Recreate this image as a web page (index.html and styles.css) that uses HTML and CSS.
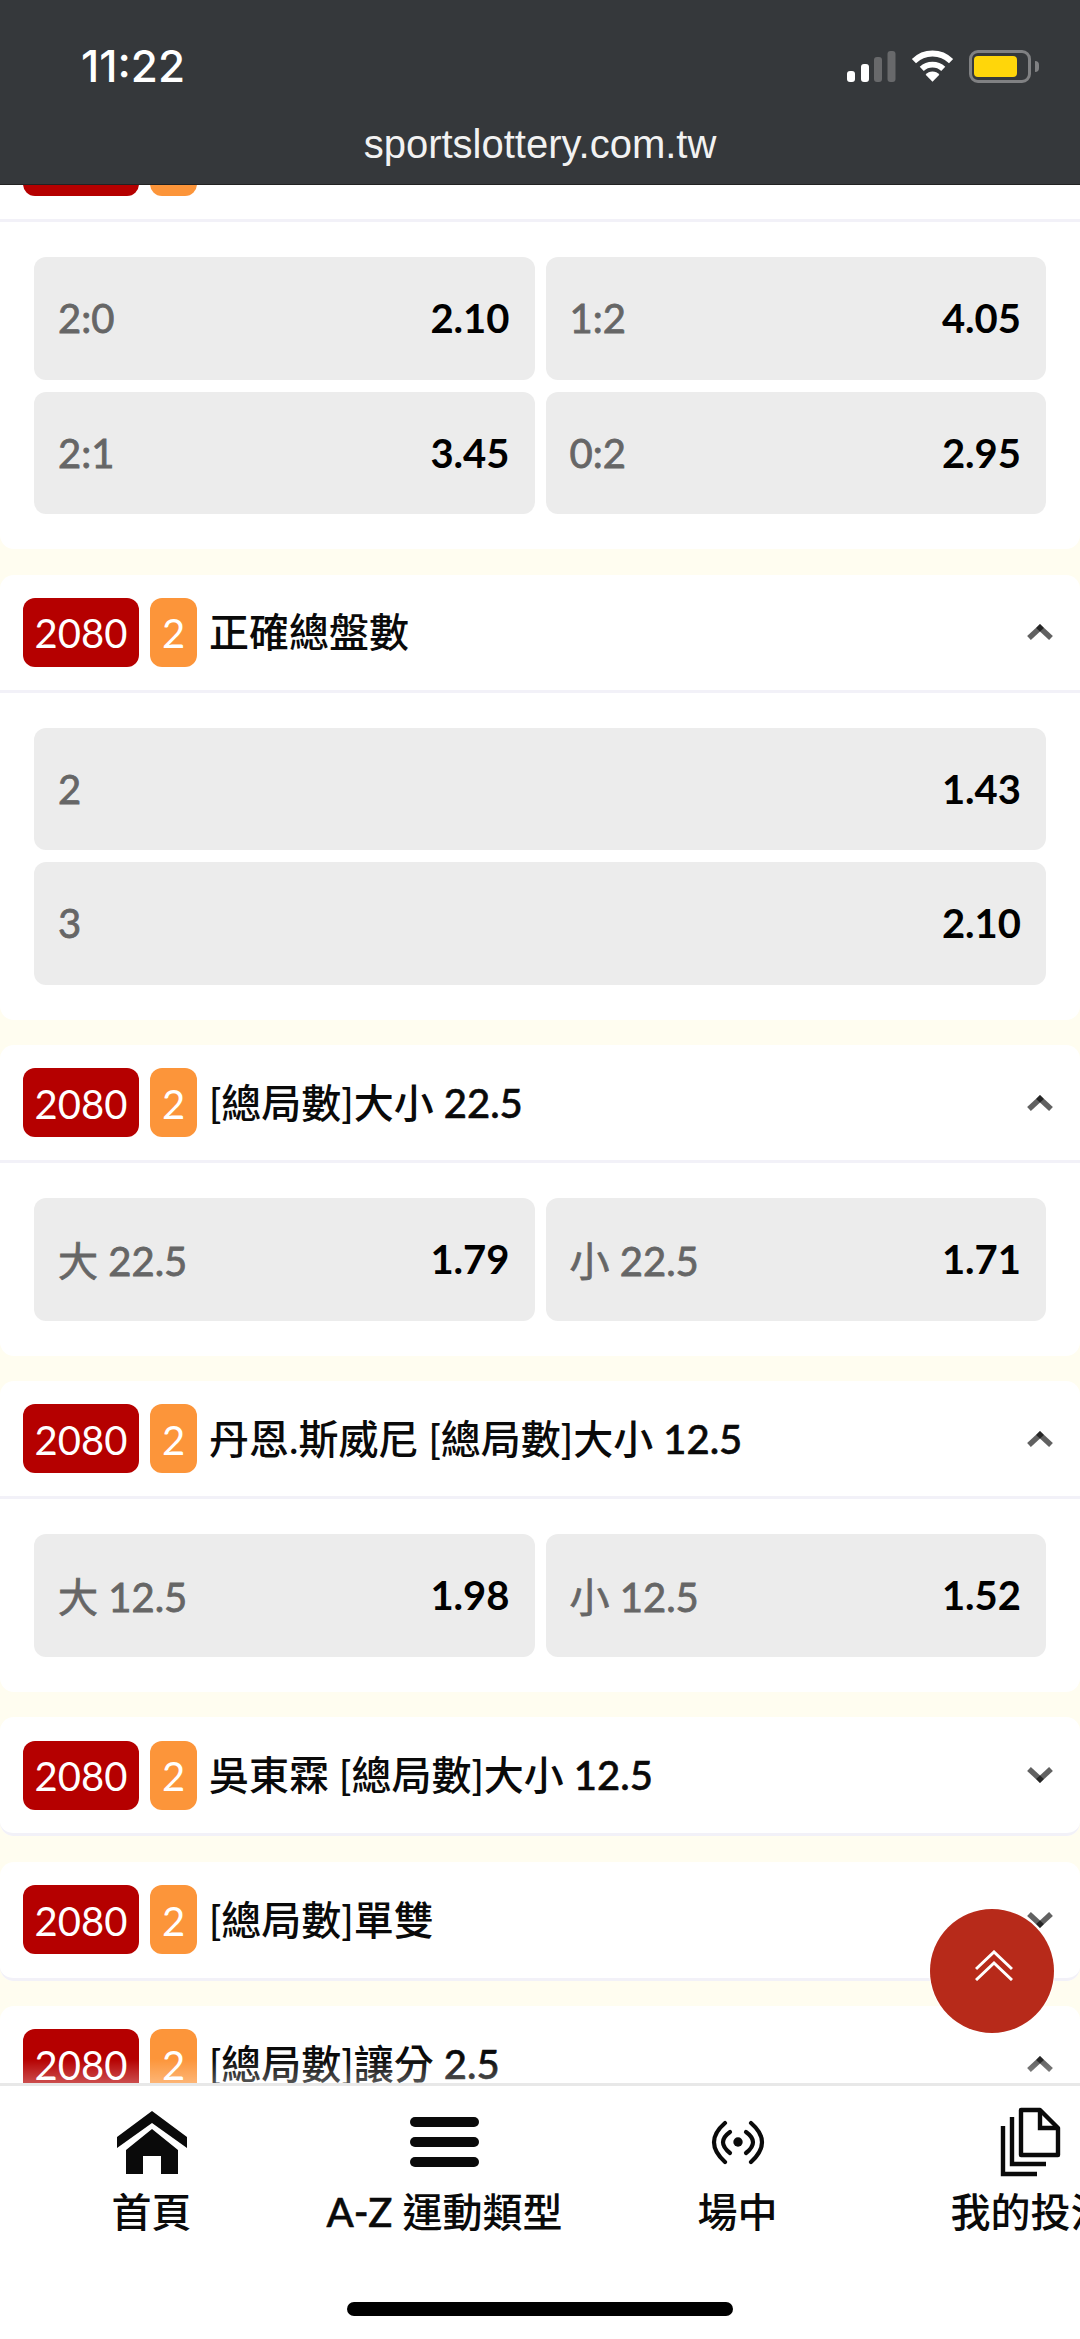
FILE: index.html
```html
<!DOCTYPE html>
<html>

<head>
	<meta charset="UTF-8">
	<link rel="stylesheet" href="styles.css">
</head>

<body>
	<div class="phone">
		<!-- 狀態列 + 網址 -->
		<div class="top-bar">
			<div class="status-row">
				<div class="clock">11:22</div>
				<div class="status-icons">
					<svg width="49" height="31" viewBox="0 0 49 31">
						<rect x="0" y="20" width="8" height="11" rx="3" fill="#fff" />
						<rect x="14" y="13" width="8" height="18" rx="3" fill="#fff" />
						<rect x="27" y="6" width="8" height="25" rx="3" fill="#68696b" />
						<rect x="40.5" y="0" width="8" height="31" rx="3" fill="#68696b" />
					</svg>
					<svg width="43" height="32" viewBox="0 0 44 32">
						<path d="M3 11 A27 27 0 0 1 41 11" fill="none" stroke="#fff" stroke-width="6" />
						<path d="M11 19 A16 16 0 0 1 33 19" fill="none" stroke="#fff" stroke-width="6" />
						<path d="M15 25 A9 9 0 0 1 29 25 L22 32 Z" fill="#fff" />
					</svg>
					<div class="battery">
						<div class="battery-fill"></div>
					</div>
					<div class="battery-cap"></div>
				</div>
			</div>
			<div class="url">sportslottery.com.tw</div>
		</div>

		<div class="scroll-area">
			<div class="market-list">
				<!-- 第一個面板上方被頂欄蓋住 -->
				<div class="market">
					<div class="market-head">
						<span class="badge-code"></span>
						<span class="badge-num"></span>
					</div>
					<div class="market-body odds-grid">
						<div class="odd"><span class="odd-name">2:0</span><span class="odd-price">2.10</span></div>
						<div class="odd"><span class="odd-name">1:2</span><span class="odd-price">4.05</span></div>
						<div class="odd"><span class="odd-name">2:1</span><span class="odd-price">3.45</span></div>
						<div class="odd"><span class="odd-name">0:2</span><span class="odd-price">2.95</span></div>
					</div>
				</div>

				<div class="market">
					<div class="market-head">
						<span class="badge-code">2080</span>
						<span class="badge-num">2</span>
						<span class="market-title">正確總盤數</span>
						<svg class="chev" viewBox="0 0 26 16"><path d="M2 14 L15 2" /><path d="M24 14 L11 2" /></svg>
					</div>
					<div class="market-body odds-grid">
						<div class="odd wide"><span class="odd-name">2</span><span class="odd-price">1.43</span></div>
						<div class="odd wide"><span class="odd-name">3</span><span class="odd-price">2.10</span></div>
					</div>
				</div>

				<div class="market">
					<div class="market-head">
						<span class="badge-code">2080</span>
						<span class="badge-num">2</span>
						<span class="market-title">[總局數]大小 <span class="latin">22.5</span></span>
						<svg class="chev" viewBox="0 0 26 16"><path d="M2 14 L15 2" /><path d="M24 14 L11 2" /></svg>
					</div>
					<div class="market-body odds-grid">
						<div class="odd"><span class="odd-name">大 22.5</span><span class="odd-price">1.79</span></div>
						<div class="odd"><span class="odd-name">小 22.5</span><span class="odd-price">1.71</span></div>
					</div>
				</div>

				<div class="market">
					<div class="market-head">
						<span class="badge-code">2080</span>
						<span class="badge-num">2</span>
						<span class="market-title">丹恩.斯威尼 [總局數]大小 <span class="latin">12.5</span></span>
						<svg class="chev" viewBox="0 0 26 16"><path d="M2 14 L15 2" /><path d="M24 14 L11 2" /></svg>
					</div>
					<div class="market-body odds-grid">
						<div class="odd"><span class="odd-name">大 12.5</span><span class="odd-price">1.98</span></div>
						<div class="odd"><span class="odd-name">小 12.5</span><span class="odd-price">1.52</span></div>
					</div>
				</div>

				<div class="market closed">
					<div class="market-head">
						<span class="badge-code">2080</span>
						<span class="badge-num">2</span>
						<span class="market-title">吳東霖 [總局數]大小 <span class="latin">12.5</span></span>
						<svg class="chev" viewBox="0 0 26 16"><path d="M2 2 L15 14" /><path d="M24 2 L11 14" /></svg>
					</div>
				</div>

				<div class="market closed">
					<div class="market-head">
						<span class="badge-code">2080</span>
						<span class="badge-num">2</span>
						<span class="market-title">[總局數]單雙</span>
						<svg class="chev" viewBox="0 0 26 16"><path d="M2 2 L15 14" /><path d="M24 2 L11 14" /></svg>
					</div>
				</div>

				<div class="market">
					<div class="market-head">
						<span class="badge-code">2080</span>
						<span class="badge-num">2</span>
						<span class="market-title">[總局數]讓分 <span class="latin">2.5</span></span>
						<svg class="chev" viewBox="0 0 26 16"><path d="M2 14 L15 2" /><path d="M24 14 L11 2" /></svg>
					</div>
				</div>
			</div>
			<div class="fade-bottom"></div>
			<div class="to-top">
				<svg width="38" height="31" viewBox="0 0 38 31">
					<path d="M1 19 L19 2 L37 19 M1 30 L19 13 L37 30" />
				</svg>
			</div>
		</div>

		<!-- 底部選單 -->
		<div class="bottom-nav">
			<div class="nav-item">
				<div class="nav-icon">
					<svg width="70" height="63" viewBox="0 0 70 63">
						<path d="M35 0 L70 26 V37 L35 12 L0 37 V26 Z" fill="#0a0a0a" />
						<path d="M35 18 L61 39 V63 H44 V45 H26 V63 H9 V39 Z" fill="#0a0a0a" />
					</svg>
				</div>
				<span>首頁</span>
			</div>
			<div class="nav-item">
				<div class="nav-icon">
					<svg width="69" height="50" viewBox="0 0 69 50">
						<rect x="0" y="0" width="69" height="10" rx="5" fill="#0a0a0a" />
						<rect x="0" y="20" width="69" height="10" rx="5" fill="#0a0a0a" />
						<rect x="0" y="40" width="69" height="10" rx="5" fill="#0a0a0a" />
					</svg>
				</div>
				<span><span class="latin">A-Z</span> 運動類型</span>
			</div>
			<div class="nav-item">
				<div class="nav-icon">
					<svg width="54" height="64" viewBox="0 0 54 64" fill="none" stroke="#0a0a0a" stroke-width="4.2" stroke-linecap="round">
						<circle cx="27" cy="32" r="4.7" fill="#0a0a0a" stroke="none" />
						<path d="M19 22 Q5 32 19 43 M35 22 Q49 32 35 43" />
						<path d="M14 13 Q-8 32 14 52 M40 13 Q62 32 40 52" />
					</svg>
				</div>
				<span>場中</span>
			</div>
			<div class="nav-item">
				<div class="nav-icon">
					<svg width="60" height="68" viewBox="0 0 60 68" fill="none" stroke="#0a0a0a" stroke-width="4.4">
						<path d="M20 2 H39 L57 20 V47 H20 Z" stroke-linejoin="round" />
						<path d="M39 2 V20 H57" />
						<path d="M11 9 V56 H45" />
						<path d="M2 18 V66 H36" />
					</svg>
				</div>
				<span>我的投注</span>
			</div>
		</div>
		<div class="home-bar">
			<div class="home-indicator"></div>
		</div>
	</div>
</body>

</html>
```

FILE: styles.css
```css
html,
body {
	overflow: hidden;
	width: 100%;
	height: 100%;
	margin: 0;
	padding: 0;
}

body {
	font-family: "Lato", "Noto Sans CJK TC", sans-serif;
	color: #000;
}

.phone {
	display: flex;
	flex-direction: column;
	width: 1080px;
	height: 2339px;
	overflow: hidden;
	background: #fff;
}

/* 頂欄 */
.top-bar {
	height: 185px;
	flex-shrink: 0;
	box-sizing: border-box;
	background: #35383b;
	color: #fff;
	position: relative;
	z-index: 2;
	border-bottom: 1px solid #222;
}

.status-row {
	display: flex;
	justify-content: space-between;
	align-items: center;
	height: 50px;
	padding: 41px 41px 0 81px;
}

.clock {
	font-family: "Inter", "Liberation Sans", sans-serif;
	font-size: 44px;
	font-weight: 500;
}

.status-icons {
	display: flex;
	align-items: center;
	gap: 15px;
}

.status-icons svg {
	overflow: visible;
}

.battery {
	box-sizing: border-box;
	width: 62px;
	height: 33px;
	padding: 3px 2px;
	border: 3px solid #808183;
	border-radius: 9px;
}

.battery-fill {
	height: 100%;
	width: 43px;
	background: #ffd60a;
	border-radius: 4px;
}

.battery-cap {
	width: 4px;
	height: 11px;
	margin-left: -11px;
	background: #808183;
	border-radius: 0 4px 4px 0;
}

.url {
	margin-top: 31px;
	text-align: center;
	font-family: "Liberation Sans", sans-serif;
	font-size: 40px;
	line-height: 44px;
	color: #f2f2f2;
}

/* 中間捲動區 */
.scroll-area {
	position: relative;
	flex: 1;
	min-height: 0;
	overflow: hidden;
	background: #fffdf0;
}

.market-list {
	display: flex;
	flex-direction: column;
	gap: 25.5px;
	margin-top: -81px;
}

.market {
	background: #fff;
	border-radius: 14px;
}

.market-head {
	display: flex;
	align-items: center;
	height: 115px;
	padding: 0 27px 0 23px;
	border-bottom: 3px solid #f2f1f8;
}

.market.closed .market-head {
	height: 116px;
	border-radius: 14px;
}

.badge-code,
.badge-num {
	display: flex;
	align-items: center;
	justify-content: center;
	box-sizing: border-box;
	height: 69px;
	padding-top: 2px;
	border-radius: 12px;
	color: #fff;
	font-size: 40px;
}

.badge-code {
	width: 116px;
	background: #b50000;
}

.badge-num {
	width: 47px;
	margin-left: 11px;
	background: #fc953a;
}

.market-title {
	flex: 1;
	margin-left: 12px;
	padding-bottom: 4px;
	font-size: 40px;
	font-weight: 500;
	color: #0a0a0a;
}

/* 半粗數字，Lato 只有 regular 跟 bold */
.latin {
	-webkit-text-stroke: 0.6px currentColor;
}

.chev {
	width: 26px;
	height: 16px;
	fill: none;
	stroke: #000;
	stroke-opacity: 0.62;
	stroke-width: 5.5;
}

.market-body {
	padding: 35px 34px;
}

.odds-grid {
	display: grid;
	grid-template-columns: 1fr 1fr;
	gap: 12px 11px;
}

.odd {
	display: flex;
	justify-content: space-between;
	align-items: center;
	height: 122.5px;
	box-sizing: border-box;
	padding: 0 25px 0 24px;
	background: #ececec;
	border-radius: 12px;
	font-size: 40px;
}

.odd.wide {
	grid-column: 1 / 3;
}

.odd-name {
	color: #666;
	-webkit-text-stroke: 0.8px #666;
}

.odd-price {
	color: #000;
	font-weight: 700;
}

.fade-bottom {
	position: absolute;
	left: 0;
	right: 0;
	bottom: 0;
	height: 24px;
	background: linear-gradient(rgba(255, 255, 255, 0), rgba(255, 255, 255, 0.3));
}

.to-top {
	position: absolute;
	right: 26px;
	bottom: 50px;
	display: flex;
	align-items: center;
	justify-content: center;
	box-sizing: border-box;
	width: 124px;
	height: 124px;
	padding: 0 0 12px 4px;
	background: #b72a1a;
	box-shadow: 0 0 0 1px #fff;
	border-radius: 50%;
}

.to-top svg {
	fill: none;
	stroke: #fff;
	stroke-width: 3;
}

/* 底部選單 */
.bottom-nav {
	flex-shrink: 0;
	display: flex;
	height: 128px;
	padding: 22px 0 0 5px;
	background: #fff;
	border-top: 3px solid #e8e8e8;
}

.nav-item {
	display: flex;
	flex-direction: column;
	align-items: center;
	flex-shrink: 0;
	width: 293px;
	font-size: 40px;
	line-height: 48px;
	font-weight: 500;
	color: #0a0a0a;
	white-space: nowrap;
}

.nav-icon {
	display: flex;
	align-items: center;
	justify-content: center;
	height: 68px;
	margin-bottom: 12px;
}

.nav-icon svg {
	display: block;
	overflow: visible;
}

.home-bar {
	flex-shrink: 0;
	display: flex;
	justify-content: center;
	height: 103px;
	background: #fff;
}

.home-indicator {
	width: 386px;
	height: 14px;
	margin-top: 66px;
	background: #000;
	border-radius: 7px;
}
```
